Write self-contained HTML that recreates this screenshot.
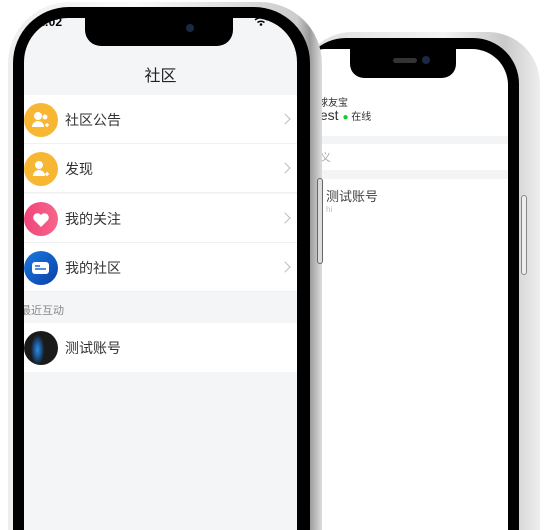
<!DOCTYPE html>
<html><head><meta charset="utf-8"><style>
*{margin:0;padding:0;box-sizing:border-box}
html,body{width:550px;height:530px;overflow:hidden}
body{background:#fff;position:relative;font-family:"Liberation Sans","Noto Sans CJK SC",sans-serif}
.abs{position:absolute}
.row{position:absolute;left:0;width:273px;height:49px;background:#fff;border-bottom:1px solid #f0f0f0}
.row .t{position:absolute;left:41px;top:15px;font-size:14px;color:#333}
.row .ic{position:absolute;left:0;top:8px;width:34px;height:34px;border-radius:50%}
.row .ic svg{position:absolute;left:0;top:0}
.row .ch{position:absolute;right:8px;top:20px;width:8px;height:8px;border-top:1px solid #bbb;border-right:1px solid #bbb;transform:rotate(45deg)}
</style></head><body>
<!-- right phone -->
<div class="abs" style="left:300px;top:32px;width:240px;height:560px;border-radius:52px;background:linear-gradient(90deg,#ddd,#f4f4f4 60%,#c9c9c9 85%,#eee);"></div>
<div class="abs" style="left:300px;top:38px;width:219px;height:560px;border-radius:46px;background:#000"></div>
<div class="abs" style="left:290px;top:49px;width:218px;height:560px;border-radius:36px;background:#fff;overflow:hidden">
  <div class="abs" style="left:28px;top:45px;font-size:10px;color:#333">球友宝</div>
  <div class="abs" style="left:26px;top:58px;font-size:14px;color:#333">test <span style="color:#1c3;font-size:10px">●</span><span style="font-size:10px"> 在线</span></div>
  <div class="abs" style="left:0;top:87px;width:218px;height:8px;background:#f3f4f5"></div>
  <div class="abs" style="left:30px;top:100px;font-size:11px;color:#aaa">义</div>
  <div class="abs" style="left:0;top:121px;width:218px;height:9px;background:#f3f4f5"></div>
  <div class="abs" style="left:36px;top:137px;font-size:13px;color:#444">测试账号</div>
  <div class="abs" style="left:36px;top:156px;font-size:8px;color:#bbb">hi</div>
</div>
<div class="abs" style="left:350px;top:48px;width:106px;height:30px;border-radius:0 0 14px 14px;background:#000"></div>
<div class="abs" style="left:393px;top:58px;width:24px;height:5px;border-radius:3px;background:#333"></div>
<div class="abs" style="left:422px;top:56px;width:8px;height:8px;border-radius:50%;background:#1a2a44"></div>
<div class="abs" style="left:521px;top:195px;width:6px;height:80px;border-radius:3px;border:1px solid #888;background:#eee"></div>
<!-- left phone -->
<div class="abs" style="left:8px;top:2px;width:314px;height:600px;border-radius:62px;background:linear-gradient(90deg,#eee,#fafafa 40%,#ccc 92%,#999 96%,#ddd)"></div>
<div class="abs" style="left:13px;top:7px;width:297px;height:600px;border-radius:56px;background:#000"></div>
<div class="abs" style="left:24px;top:18px;width:273px;height:600px;border-radius:44px;background:#f4f5f7;overflow:hidden">
  <div class="abs" style="left:14px;top:-3px;font-size:12px;color:#000;font-weight:bold">1:02</div>
  <div class="abs" style="left:0;top:44px;width:273px;text-align:center;font-size:16px;color:#222">社区</div>
  <div class="row" style="top:77px"><div class="ic" style="background:#f7b733"><svg width="34" height="34"><circle cx="14" cy="13" r="4" fill="#fff"/><path d="M8 24a6 6 0 0 1 12 0z" fill="#fff"/><circle cx="21" cy="14" r="2.5" fill="#fff"/><path d="M21 22h4M23 20v4" stroke="#fff" stroke-width="1.5"/></svg></div><div class="t">社区公告</div><div class="ch"></div></div>
  <div class="row" style="top:126px"><div class="ic" style="background:#f7b733"><svg width="34" height="34"><circle cx="15" cy="13" r="4" fill="#fff"/><path d="M9 24a6 6 0 0 1 12 0z" fill="#fff"/><path d="M21 22h4M23 20v4" stroke="#fff" stroke-width="1.5"/></svg></div><div class="t">发现</div><div class="ch"></div></div>
  <div class="row" style="top:176px"><div class="ic" style="background:linear-gradient(90deg,#f0457a,#f7668a)"><svg width="34" height="34"><path d="M17 25l-7-7a4 4 0 0 1 7-5a4 4 0 0 1 7 5z" fill="#fff"/></svg></div><div class="t">我的关注</div><div class="ch"></div></div>
  <div class="row" style="top:225px"><div class="ic" style="background:linear-gradient(135deg,#1a7ae0,#0a3fa8)"><svg width="34" height="34"><rect x="8" y="11" width="17" height="12" rx="3" fill="#fff"/><path d="M11 15h5M11 18h11" stroke="#1a6ad0" stroke-width="1.5"/></svg></div><div class="t">我的社区</div><div class="ch"></div></div>
  <div class="abs" style="left:-4px;top:284px;font-size:11px;color:#888">最近互动</div>
  <div class="row" style="top:305px;border:none"><div class="ic" style="background:radial-gradient(ellipse 20% 45% at 40% 55%,#2a8fe0 0,#1a4a80 60%,#1a1a1a 100%)"></div><div class="t">测试账号</div></div>
</div>
<div class="abs" style="left:85px;top:14px;width:148px;height:32px;border-radius:0 0 16px 16px;background:#000"></div>
<div class="abs" style="left:186px;top:24px;width:8px;height:8px;border-radius:50%;background:#1a2a44"></div>
<svg class="abs" style="left:254px;top:16px" width="14" height="10"><path d="M1 4a9 9 0 0 1 12 0M3.5 6.5a5.5 5.5 0 0 1 7 0" stroke="#000" stroke-width="1.5" fill="none"/><circle cx="7" cy="8.5" r="1.3" fill="#000"/></svg>
<div class="abs" style="left:317px;top:178px;width:6px;height:86px;border-radius:3px;border:1px solid #666;background:#ddd"></div>
</body></html>
